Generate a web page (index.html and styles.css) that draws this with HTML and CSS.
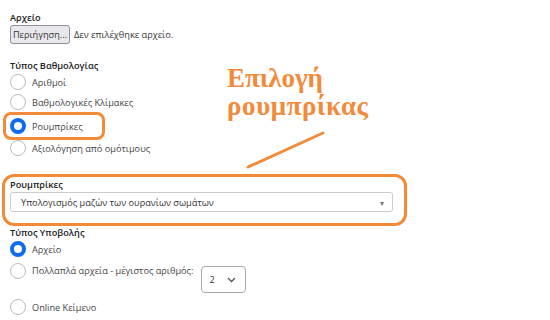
FILE: index.html
```html
<!DOCTYPE html>
<html lang="el">

<head>
    <meta charset="UTF-8">
    <meta name="viewport" content="width=device-width, initial-scale=1.0">
    <title>Ρυθμίσεις εργασίας</title>
    <link rel="stylesheet" href="styles.css">
</head>

<body>
    <div class="form">
        <div class="field">
            <div class="field-label">Αρχείο</div>
            <div class="file-row">
                <button class="file-btn">Περιήγηση...</button>
                <span class="file-name">Δεν επιλέχθηκε αρχείο.</span>
            </div>
        </div>

        <div class="field grading">
            <div class="field-label">Τύπος Βαθμολογίας</div>
            <label class="radio-row first"><span class="radio"></span>Αριθμοί</label>
            <label class="radio-row"><span class="radio"></span>Βαθμολογικές Κλίμακες</label>
            <label class="radio-row highlight"><span class="radio checked"></span>Ρουμπρίκες</label>
            <label class="radio-row"><span class="radio"></span>Αξιολόγηση από ομότιμους</label>
        </div>

        <div class="field rubric-box">
            <div class="field-label">Ρουμπρίκες</div>
            <div class="select wide">
                <span>Υπολογισμός μαζών των ουρανίων σωμάτων</span>
                <span class="caret">▾</span>
            </div>
        </div>

        <div class="field submission">
            <div class="field-label">Τύπος Υποβολής</div>
            <label class="radio-row first"><span class="radio checked"></span>Αρχείο</label>
            <label class="radio-row multi">
                <span class="radio"></span>
                <span class="multi-text">Πολλαπλά αρχεία - μέγιστος αριθμός:</span>
                <span class="num-select">2
                    <svg width="9" height="6" viewBox="0 0 9 6"><path d="M1 1l3.5 3.5L8 1" fill="none" stroke="#555" stroke-width="1.3" /></svg>
                </span>
            </label>
            <label class="radio-row"><span class="radio"></span>Online Κείμενο</label>
        </div>
    </div>

    <div class="note">
        <div>Επιλογή</div>
        <div class="note-wide">ρουμπρίκας</div>
    </div>
    <svg class="pointer" width="550" height="320" viewBox="0 0 550 320">
        <line x1="248" y1="167" x2="323" y2="133" stroke="#f28a3a" stroke-width="3" stroke-linecap="round" />
    </svg>
</body>

</html>
```

FILE: styles.css
```css
* {
    box-sizing: border-box;
    margin: 0;
    padding: 0;
}

body {
    font-family: "Open Sans", "Noto Sans", sans-serif;
    font-size: 9.2px;
    color: #444;
    background-color: white;
    width: 550px;
    height: 320px;
    overflow: hidden;
    position: relative;
}

.form {
    padding: 12px 0 0 10px;
}

.field-label {
    font-weight: 600;
    color: #222;
    line-height: 12px;
}

.file-row {
    display: flex;
    align-items: center;
    gap: 4px;
    margin-top: 1px;
}

.file-btn {
    font-family: inherit;
    font-size: 9.2px;
    color: #333;
    height: 19px;
    width: 60px;
    padding: 0;
    background-color: #e9e9ed;
    border: 1px solid #8f8f9d;
    border-radius: 3px;
}

.file-name {
    color: #333;
}

.grading {
    margin-top: 16px;
}

.radio-row {
    display: flex;
    align-items: center;
    gap: 6px;
    height: 16px;
    margin-top: 4px;
}

.radio-row.first {
    margin-top: 2px;
}

.radio {
    width: 16px;
    height: 16px;
    border: 1px solid #bbb;
    border-radius: 50%;
    background-color: white;
    flex-shrink: 0;
}

.radio.checked {
    border: 4.5px solid #0f6cf0;
}

.highlight {
    margin: 2px 0 0 -7px;
    width: 102px;
    height: 28px;
    padding-left: 4px;
    border: 3px solid #f28a3a;
    border-radius: 8px;
}

.highlight + .radio-row {
    margin-top: 0;
}

.rubric-box {
    margin: 18px 0 0 -8px;
    width: 405px;
    height: 52px;
    padding: 2px 0 0 5px;
    border: 3px solid #f28a3a;
    border-radius: 12px;
}

.select {
    display: flex;
    align-items: center;
    justify-content: space-between;
    height: 20px;
    margin-top: 1px;
    padding: 0 8px 0 10px;
    color: #333;
    border: 1px solid #ccc;
    border-radius: 3px;
    background-color: white;
}

.wide {
    width: 383px;
}

.caret {
    font-size: 8px;
    color: #777;
}

.submission {
    margin-top: 1px;
}

.multi {
    align-items: flex-start;
    height: 30px;
    margin-top: 6px;
}

.multi-text {
    line-height: 16px;
}

.num-select {
    display: flex;
    align-items: center;
    gap: 12px;
    height: 27px;
    margin: 3px 0 0 2px;
    padding: 0 9px 0 7px;
    color: #333;
    border: 1px solid #aaa;
    border-radius: 4px;
}

.multi + .radio-row {
    margin-top: 6px;
}

.note {
    position: absolute;
    left: 227px;
    top: 64px;
    font-family: "Liberation Serif", serif;
    font-weight: bold;
    font-size: 27px;
    line-height: 28px;
    color: #f28a3a;
}

.note-wide {
    letter-spacing: 0.6px;
}

.pointer {
    position: absolute;
    left: 0;
    top: 0;
    pointer-events: none;
}
```
